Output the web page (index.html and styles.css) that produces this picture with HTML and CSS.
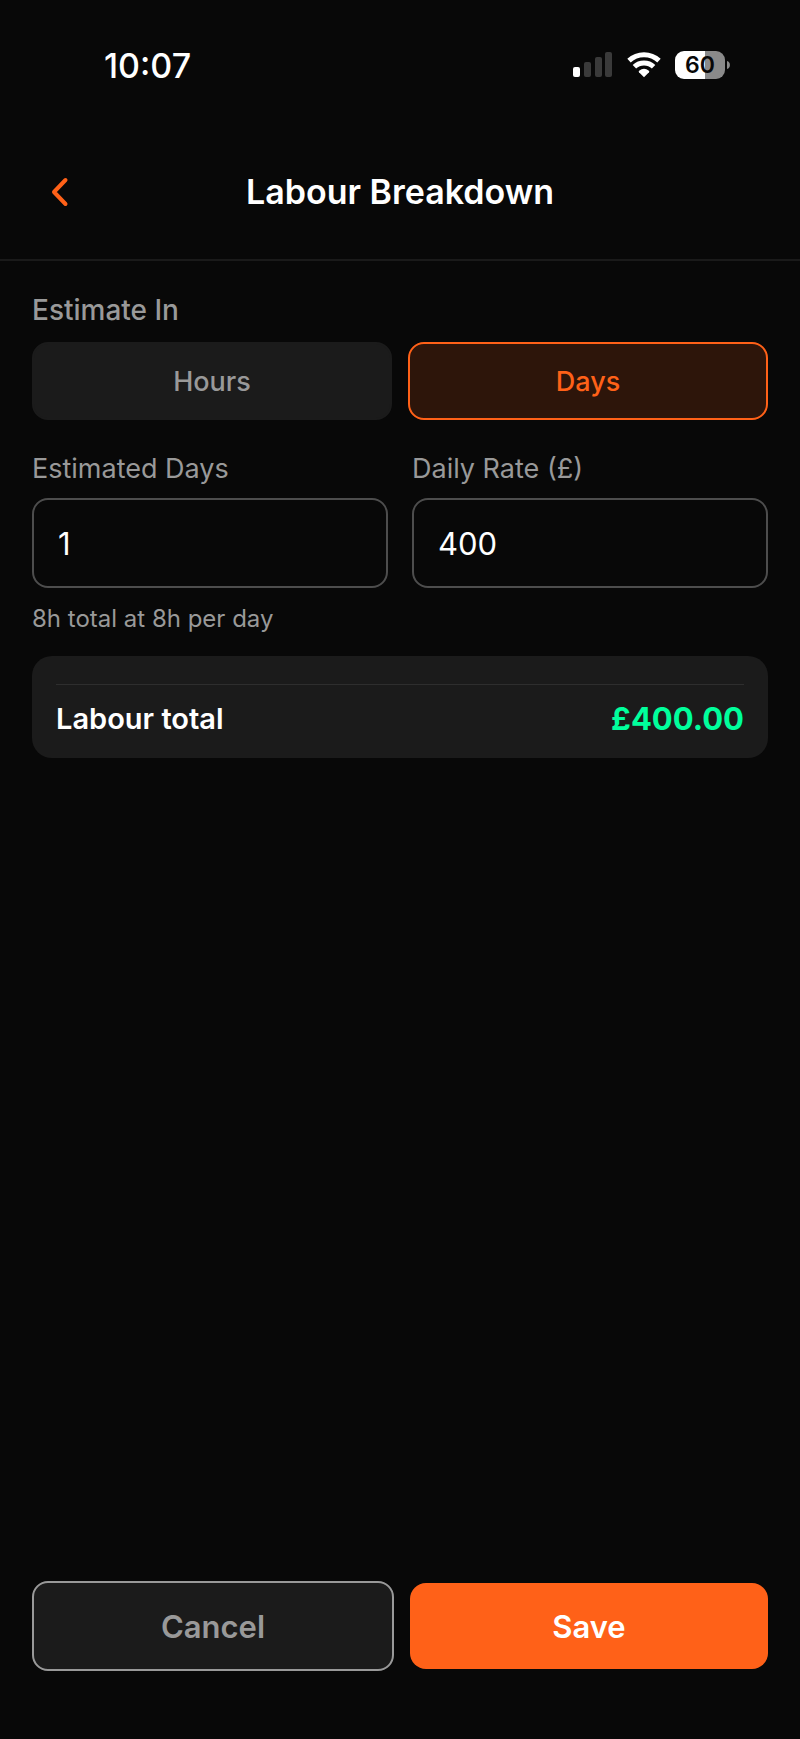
FILE: index.html
```html
<!DOCTYPE html>
<html lang="en-GB">
<head>
<meta charset="utf-8">
<meta name="viewport" content="width=device-width, initial-scale=1">
<title>Labour Breakdown</title>
<link rel="stylesheet" href="styles.css">
</head>
<body>
<div class="screen">
  <div class="status">
    <span class="time">10:07</span>
    <div class="indicators">
      <svg class="signal" width="40" height="26" viewBox="0 0 40 26" aria-hidden="true">
        <rect x="0" y="15" width="7" height="10" rx="2" fill="#fff"/>
        <rect x="11" y="10" width="7" height="15" rx="2" fill="#3a3a3a"/>
        <rect x="22" y="5" width="7" height="20" rx="2" fill="#3a3a3a"/>
        <rect x="32" y="0" width="7" height="25" rx="2" fill="#3a3a3a"/>
      </svg>
      <svg class="wifi" width="34" height="26" viewBox="0 0 34 26" aria-hidden="true">
        <g fill="none" stroke="#fff" stroke-width="5">
          <path d="M2 8.6a22 22 0 0 1 30 0"/>
          <path d="M7.4 14.8a14 14 0 0 1 19.2 0"/>
        </g>
        <path d="M17 25.2l-5-5a1 1 0 0 1 .1-1.4 7.8 7.8 0 0 1 9.8 0 1 1 0 0 1 .1 1.4z" fill="#fff"/>
      </svg>
      <div class="battery">
        <span class="level">60</span>
        <svg width="3" height="8" viewBox="0 0 3 8" aria-hidden="true"><path d="M0 0a4.2 4.2 0 0 1 0 8z" fill="#8a8a8a"/></svg>
      </div>
    </div>
  </div>

  <header class="header">
    <button class="back" type="button" aria-label="Back">
      <svg width="20" height="30" viewBox="0 0 20 30" aria-hidden="true"><path d="M15.500 3L4 15l11.500 12" fill="none" stroke="#ff6118" stroke-width="4" stroke-linecap="round" stroke-linejoin="round"/></svg>
    </button>
    <h1 class="title">Labour Breakdown</h1>
  </header>

  <form class="form">
    <main class="content">
      <div class="group" role="group" aria-labelledby="unit">
        <span class="label label-strong" id="unit">Estimate In</span>
        <div class="segments">
          <button class="segment" type="button" aria-pressed="false">Hours</button>
          <button class="segment selected" type="button" aria-pressed="true">Days</button>
        </div>
      </div>
      <div class="fields">
        <div class="field">
          <label class="label" for="days">Estimated Days</label>
          <input class="input" id="days" type="text" inputmode="decimal" value="1">
        </div>
        <div class="field">
          <label class="label" for="rate">Daily Rate (£)</label>
          <input class="input" id="rate" type="text" inputmode="decimal" value="400">
        </div>
      </div>
      <p class="hint">8h total at 8h per day</p>
      <section class="card">
        <div class="total">
          <span class="total-name">Labour total</span>
          <span class="total-value">£400.00</span>
        </div>
      </section>
    </main>
    <footer class="actions">
      <button class="action cancel" type="button">Cancel</button>
      <button class="action save" type="submit">Save</button>
    </footer>
  </form>
</div>
</body>
</html>
```

FILE: styles.css
```css
* {
  box-sizing: border-box;
}

body {
  margin: 0;
  background: #080808;
  color: #fff;
  font-family: Inter, "Liberation Sans", sans-serif;
}

button,
input {
  font: inherit;
  color: inherit;
}

button {
  padding: 0;
  border: 0;
  cursor: pointer;
}

.screen {
  display: flex;
  flex-direction: column;
  min-height: 100vh;
}

.status {
  display: flex;
  align-items: center;
  justify-content: space-between;
  height: 130px;
  padding: 0 70px 0 104px;
}

.time {
  font-size: 34px;
  font-weight: 500;
}

.indicators {
  display: flex;
  align-items: center;
  gap: 14px;
}

.battery {
  display: flex;
  align-items: center;
  gap: 2px;
}

.level {
  width: 50px;
  border-radius: 9px;
  background: linear-gradient(90deg, #fff 60%, #8a8a8a 60%);
  color: #080808;
  font-size: 23px;
  font-weight: 600;
  line-height: 28px;
  text-align: center;
}

.header {
  display: grid;
  grid-template-columns: 56px 1fr 56px;
  align-items: center;
  height: 131px;
  padding: 0 32px 6px;
  border-bottom: 2px solid #1a1a1a;
}

.back {
  display: flex;
  align-items: center;
  justify-content: center;
  height: 56px;
  background: none;
}

.title {
  margin: 0;
  font-size: 34px;
  font-weight: 600;
  line-height: 44px;
  text-align: center;
}

.form {
  display: flex;
  flex: 1;
  flex-direction: column;
  justify-content: space-between;
}

.content {
  padding: 31px 32px 32px;
}

.label {
  display: block;
  margin-bottom: 11px;
  color: #999;
  font-size: 27px;
  line-height: 36px;
}

.label-strong {
  margin-bottom: 14px;
  font-size: 28px;
  font-weight: 500;
}

.segments {
  display: grid;
  grid-template-columns: 1fr 1fr;
  gap: 16px;
}

.segment {
  height: 78px;
  border: 2px solid #1b1b1b;
  border-radius: 16px;
  background: #1b1b1b;
  color: #999;
  font-size: 27px;
  font-weight: 500;
}

.selected {
  border-color: #ff6118;
  background: #2d150a;
  color: #ff6118;
}

.fields {
  display: grid;
  grid-template-columns: 1fr 1fr;
  gap: 24px;
  margin-top: 31px;
}

.input {
  display: block;
  width: 100%;
  height: 90px;
  padding: 0 24px;
  border: 2px solid #4d4d4d;
  border-radius: 16px;
  background: transparent;
  font-size: 31px;
}

.hint {
  margin: 16px 0 22px;
  color: #999;
  font-size: 24px;
  line-height: 30px;
}

.card {
  padding: 28px 24px 21px;
  border-radius: 20px;
  background: #1b1b1b;
}

.total {
  display: flex;
  align-items: center;
  justify-content: space-between;
  padding-top: 16px;
  border-top: 1px solid #2e2e2e;
  line-height: 36px;
}

.total-name {
  font-size: 29px;
  font-weight: 600;
}

.total-value {
  color: #00ff9c;
  font-size: 31px;
  font-weight: 700;
}

.actions {
  display: flex;
  align-items: center;
  gap: 16px;
  padding: 16px 32px 68px;
}

.action {
  flex: 1 1 0;
  height: 86px;
  border-radius: 16px;
  font-size: 31px;
  font-weight: 600;
}

.cancel {
  height: 90px;
  border: 2px solid #999;
  background: #1b1b1b;
  color: #999;
}

.save {
  background: #ff6118;
  color: #fff;
}
```
